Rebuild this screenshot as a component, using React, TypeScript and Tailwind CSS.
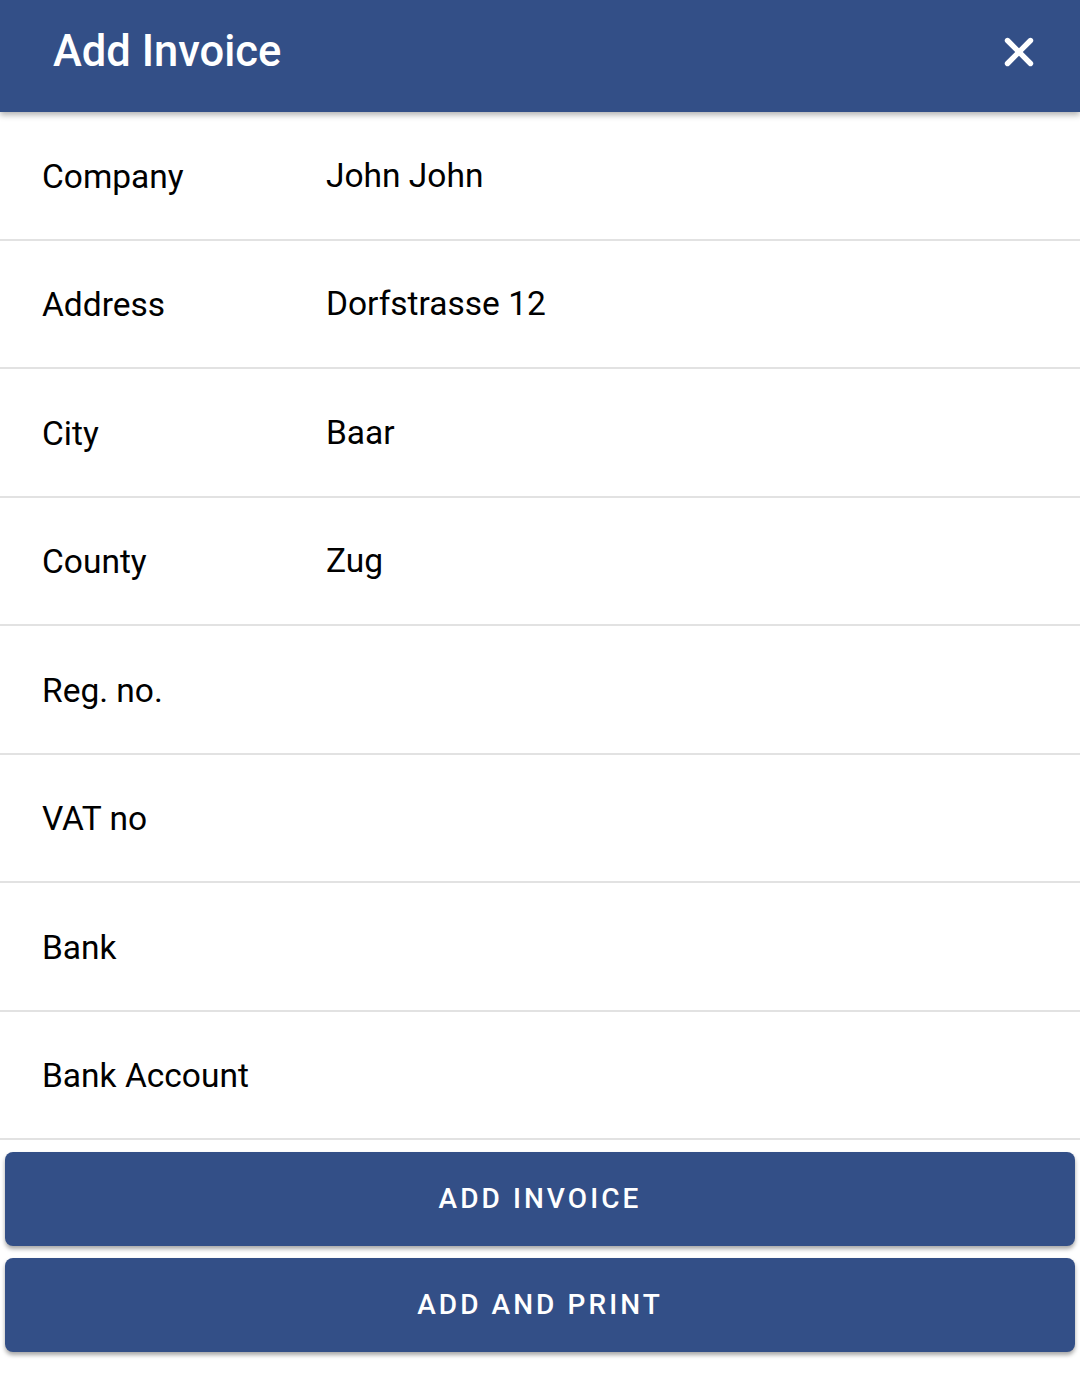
import { X } from "lucide-react";

const rows: { label: string; value: string }[] = [
  { label: "Company", value: "John John" },
  { label: "Address", value: "Dorfstrasse 12" },
  { label: "City", value: "Baar" },
  { label: "County", value: "Zug" },
  { label: "Reg. no.", value: "" },
  { label: "VAT no", value: "" },
  { label: "Bank", value: "" },
  { label: "Bank Account", value: "" },
];

export default function App() {
  return (
    <div className="w-[1080px] min-h-[1374px] bg-white font-['Roboto',sans-serif] text-black">
      <header className="relative z-10 flex h-[112px] items-center justify-between bg-[#334f87] pb-[8px] pl-[53px] pr-[38px] shadow-[0_3px_6px_rgba(0,0,0,0.3)]">
        <h1 className="text-[43.5px] font-medium leading-none text-white">Add Invoice</h1>
        <X className="h-[46px] w-[46px] text-white" strokeWidth={2.8} />
      </header>

      <div>
        {rows.map((row) => (
          <div
            key={row.label}
            className="flex h-[128.5px] items-center border-b-2 border-[#e2e2e2] pl-[42px]"
          >
            <span className="w-[284px] pt-[2px] text-[33.5px] leading-none">{row.label}</span>
            <span className="text-[33.5px] leading-none">{row.value}</span>
          </div>
        ))}
      </div>

      <div className="flex flex-col gap-[12px] px-[5px] pt-[12px]">
        <button className="h-[94px] rounded-[8px] bg-[#334f87] text-[28px] font-medium tracking-[0.11em] text-white shadow-[0_3px_4px_rgba(0,0,0,0.35)]">
          ADD INVOICE
        </button>
        <button className="h-[94px] rounded-[8px] bg-[#334f87] text-[28px] font-medium tracking-[0.11em] text-white shadow-[0_3px_4px_rgba(0,0,0,0.35)]">
          ADD AND PRINT
        </button>
      </div>
    </div>
  );
}
